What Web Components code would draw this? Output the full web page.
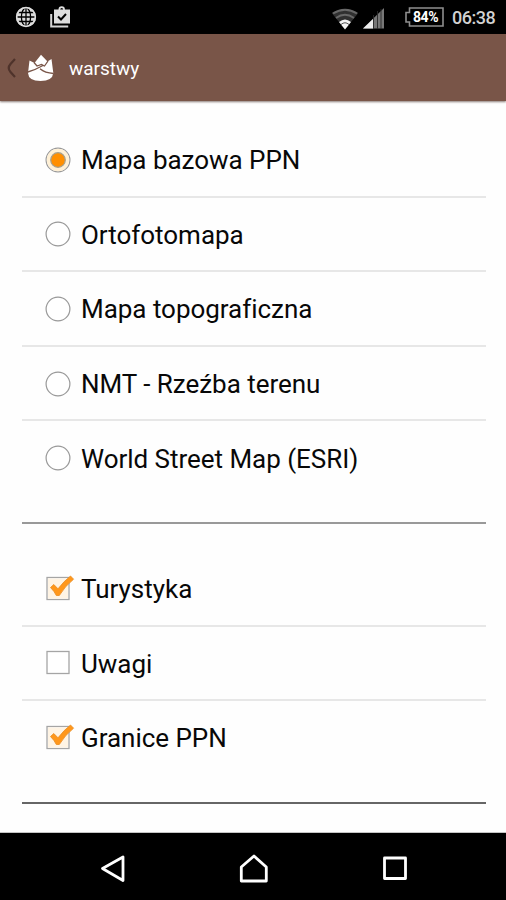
<!DOCTYPE html>
<html lang="pl">
<head>
<meta charset="utf-8">
<title>warstwy</title>
<style>
html,body{margin:0;height:100%;background:#fefefe}
body{font-family:Roboto,"Noto Sans",sans-serif;overflow:hidden}
</style>
</head>
<body>
<layers-screen></layers-screen>
<script>
function define(name, html) {
  const template = document.createElement('template');
  template.innerHTML = html;
  customElements.define(name, class extends HTMLElement {
    constructor() {
      super();
      this.attachShadow({mode: 'open'}).append(template.content.cloneNode(true));
    }
  });
}

define('status-bar', `
<style>
:host{display:flex;align-items:center;height:34px;background:#000;color:#d2d2d2;box-sizing:border-box;padding:0 10px 0 14px}
svg{display:block;flex:none}
.grow{flex:1}
.battery{display:grid;width:39px;height:20px;margin-right:8px}
.battery>*{grid-area:1/1}
.battery span{font:700 14px/20px Roboto,sans-serif;color:#fff;text-align:center;padding-left:2px;letter-spacing:-.4px}
.time{font:500 18px/34px Roboto,sans-serif;width:44px;white-space:nowrap;letter-spacing:-.5px;padding-top:1px}
</style>
<svg width="24" height="24" viewBox="0 0 24 24"><circle cx="12" cy="12" r="10" fill="#ddd"/><g fill="none" stroke="#000" stroke-width="1.3"><ellipse cx="12" cy="12" rx="4.6" ry="9"/><path d="M12 3v18M3 12h18M4.500 7.500h15M4.500 16.500h15"/></g><circle cx="12" cy="12" r="9.300" fill="none" stroke="#ddd" stroke-width="1.700"/></svg>
<svg width="24" height="24" viewBox="0 0 24 24" style="margin-left:10px"><path d="M3.200 9v12.600h17" fill="none" stroke="#d6d6d6" stroke-width="2"/><path d="M6 4.500h4.500a3.200 3.200 0 0 1 6.400 0H22v14H6z" fill="#dedede"/><path d="M12.200 4.500a1.500 1.500 0 0 1 3 0z" fill="#000"/><path d="M10 11.500l3 3 5-5.500" fill="none" stroke="#000" stroke-width="2"/></svg>
<span class="grow"></span>
<svg width="28" height="24" viewBox="0 0 28 24" style="margin:3px 4px 0 0"><path d="M14 22.500L.8 6Q14-2 27.200 6z" fill="#303030"/><g fill="none" stroke="#686868" stroke-width="2"><path d="M2 6.500Q14-1 26 6.500M5 11Q14 4.500 23 11"/></g><path d="M14 22.500L8 15Q14 10 20 15z" fill="#f4f4f4"/><path d="M10 17.500Q14 14 18 17.500" fill="none" stroke="#555"/></svg>
<svg width="21" height="22" viewBox="0 0 21 22" style="margin:2px 21px 0 0"><path d="M0 21.500L21 1v20.500z" fill="#777"/><path d="M0 21.500L10 12v9.500z" fill="#eee"/><path d="M10.500 8v14M14.500 4v18M18 2v20" stroke="#282828" stroke-width=".9"/></svg>
<div class="battery"><svg width="39" height="20" viewBox="0 0 39 20"><path d="M4.500 1H38v18H4.500v-4H1V5.500h3.500z" fill="#000" stroke="#8e8e8e" stroke-width="1.600"/></svg><span>84%</span></div>
<span class="time">06:38</span>
`);

define('title-bar', `
<style>
:host{display:flex;align-items:center;height:67px;background:#795548;color:#fff;box-shadow:0 1px 2px rgba(60,35,28,.6);padding-left:6px;box-sizing:border-box;position:relative}
svg{display:block;flex:none}
h1{margin:0 0 0 14px;font-size:19px;line-height:28px;font-weight:400;padding-top:2px}
</style>
<svg width="11" height="20" viewBox="0 0 11 20"><path d="M9 1L4.500 6Q1 10 4.500 14L9 19" fill="none" stroke="#4f332b" stroke-width="2.200"/></svg>
<svg width="28" height="28" viewBox="0 0 28 28" style="margin-left:10px"><path d="M2.500 6.500L7.500 9 14 .8 20.500 7.500 24.500 5 26.300 19q-.8 8-12.800 8T1 19z" fill="#fff"/><path d="M7 8.500l3 3.500 4.500-1.500 3 1.500 3.500-5M.8 18q7.200-2 15.200-6.500M13 14.800q5 4.200 13.500 4.700" fill="none" stroke="#795548" stroke-width="1.300"/></svg>
<h1><slot></slot></h1>
`);

define('layer-option', `
<style>
:host{display:flex;align-items:center;height:74.600px;box-sizing:border-box;border-bottom:2px solid #e7e7e7;padding-left:23px;color:#080808}
:host(:last-of-type){border-bottom-color:transparent}
svg{display:block;flex:none;overflow:visible;padding-top:1px}
svg>g{display:none}
:host([kind=radio]) .radio,:host([kind=check]) .check,:host([checked][kind=radio]) .dot,:host([checked][kind=check]) .tick{display:inline}
.label{margin-left:8px;font-size:26px;line-height:36px;white-space:nowrap;padding-top:2px;letter-spacing:-.03px}
</style>
<svg width="28" height="28" viewBox="0 0 28 28">
<g class="radio"><circle cx="13" cy="14" r="11.900" fill="#fff" stroke="#999" stroke-width="1.200"/></g>
<g class="dot"><circle cx="13" cy="14" r="11.200" fill="#fff0d5"/><circle cx="13" cy="14" r="7.300" fill="#ff8f00" stroke="#a6a08e" stroke-width="1.200"/></g>
<g class="check"><rect x="2" y="2.500" width="22" height="22" fill="#fff" stroke="#a5a5a5" stroke-width="1.300"/></g>
<g class="tick"><rect x="3" y="3.500" width="20" height="20" fill="#fff4e4"/><path d="M5.500 12.500L8.800 9.500l4.200 4.300Q19 6 25.500 1L28.600 4.200Q20 11 14.300 20.500h-3Q9.500 16.500 5.500 12.500z" fill="#ff971b" stroke="#e98b20" stroke-width=".8"/></g>
</svg>
<span class="label"><slot></slot></span>
`);

define('layer-group', `
<style>
:host{display:block;padding-bottom:26px;border-bottom:2px solid var(--rule,#999);box-sizing:border-box}
</style><slot></slot>
`);

define('nav-bar', `
<style>
:host{display:flex;align-items:center;justify-content:space-between;height:67px;background:#000;padding:5px 97px 0 99px;box-sizing:border-box;box-shadow:0 -1px 0 #c4c4c4}
svg{display:block;fill:none;stroke:#fff;stroke-width:2.800;stroke-linejoin:round}
</style>
<svg width="28" height="30" viewBox="0 0 28 30"><path d="M24 3v23.500L3.500 14.500z"/></svg>
<svg width="30" height="30" viewBox="0 0 30 30"><path d="M15 2l12.300 11v14h-25V13z"/></svg>
<svg width="28" height="30" viewBox="0 0 28 30"><path d="M3.500 4h21v20.500h-21z"/></svg>
`);

define('layers-screen', `
<style>
:host{display:flex;flex-direction:column;width:506px;height:900px;background:#fefefe}
main{flex:1;display:flex;flex-direction:column;padding:22px 20px 0 22px;gap:28px;min-height:0}
layer-group+layer-group{--rule:#666}
</style>
<status-bar></status-bar>
<title-bar>warstwy</title-bar>
<main>
<layer-group>
<layer-option kind="radio" checked>Mapa bazowa PPN</layer-option>
<layer-option kind="radio">Ortofotomapa</layer-option>
<layer-option kind="radio">Mapa topograficzna</layer-option>
<layer-option kind="radio">NMT - Rzeźba terenu</layer-option>
<layer-option kind="radio">World Street Map (ESRI)</layer-option>
</layer-group>
<layer-group>
<layer-option kind="check" checked>Turystyka</layer-option>
<layer-option kind="check">Uwagi</layer-option>
<layer-option kind="check" checked>Granice PPN</layer-option>
</layer-group>
</main>
<nav-bar></nav-bar>
`);
</script>
</body>
</html>
